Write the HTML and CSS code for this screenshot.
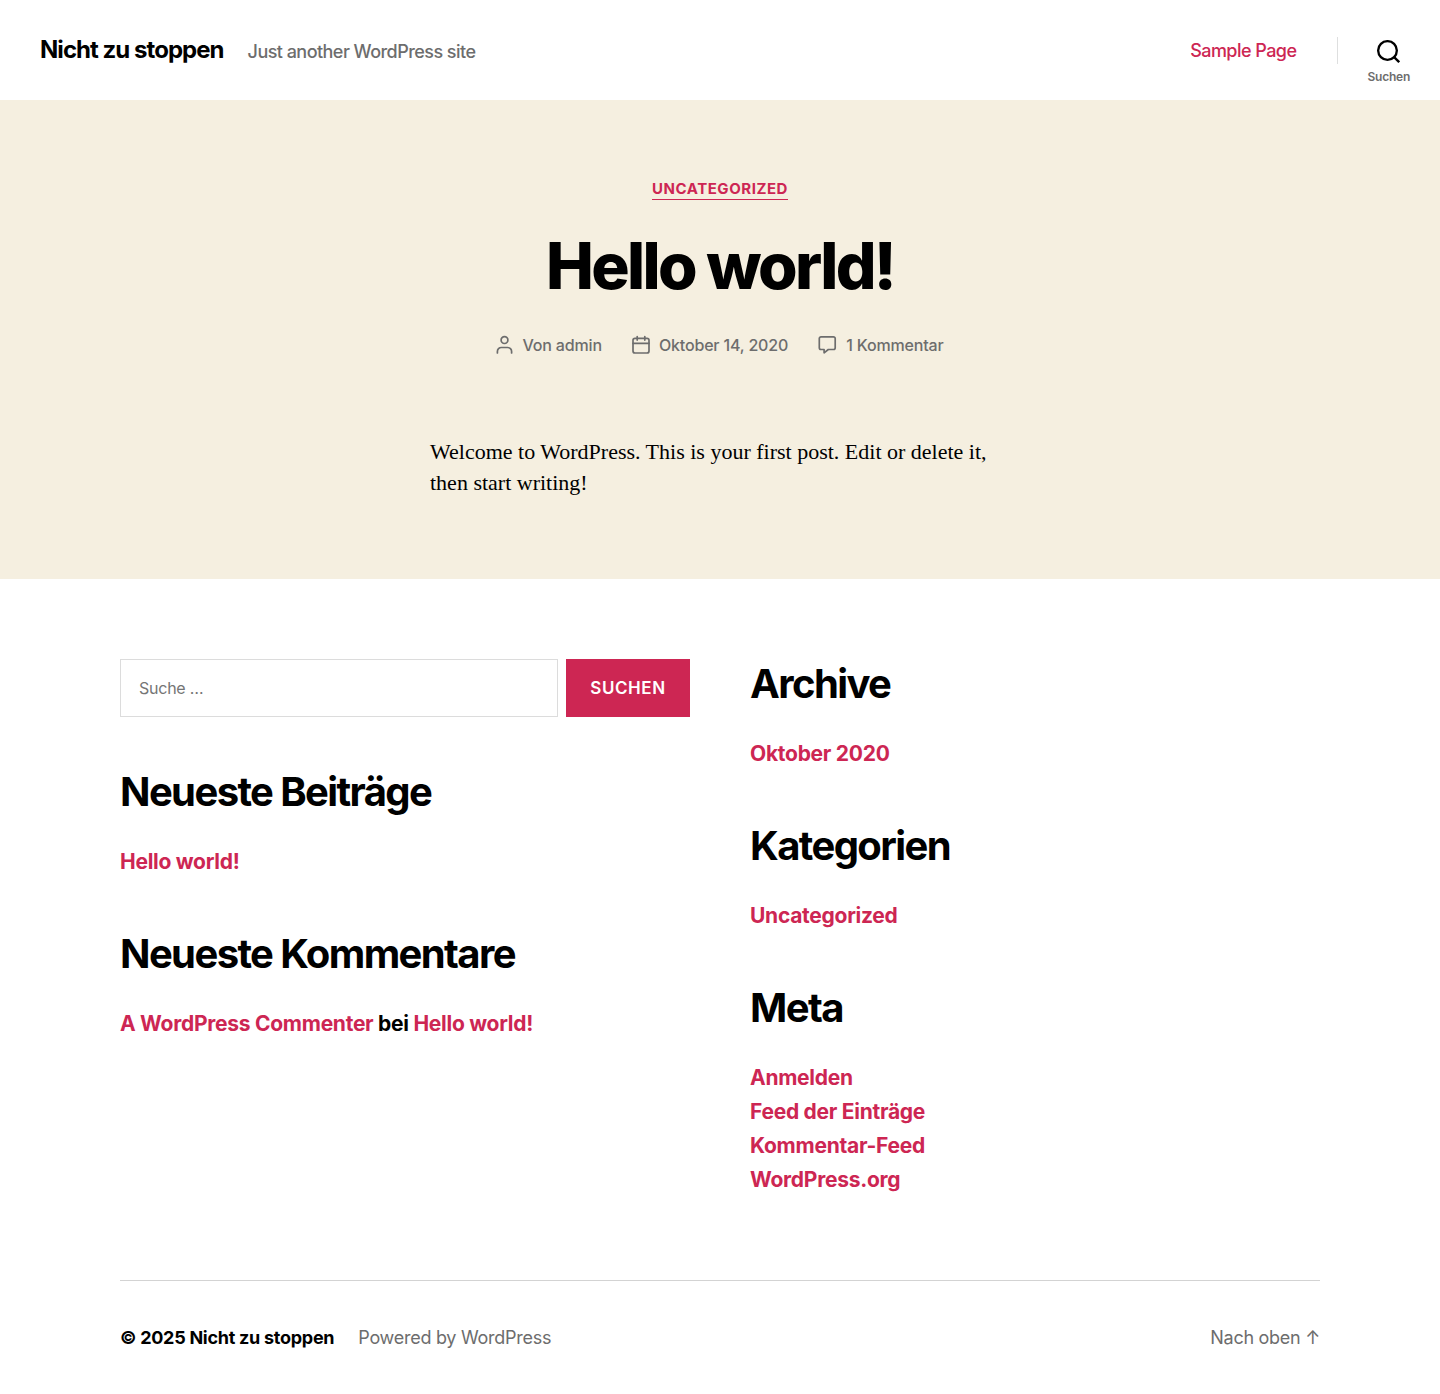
FILE: index.html
```html
<!DOCTYPE html>
<html lang="de">
<head>
<meta charset="utf-8">
<meta name="viewport" content="width=device-width, initial-scale=1">
<title>Hello world! – Nicht zu stoppen</title>
<link rel="stylesheet" href="styles.css">
</head>
<body>
<header class="site-header">
  <div class="site-titles">
    <a class="site-title" href="#">Nicht zu stoppen</a>
    <span class="site-description">Just another WordPress site</span>
  </div>
  <div class="header-navigation">
    <nav aria-label="Horizontal"><a class="menu-link" href="#">Sample Page</a></nav>
    <div class="toggle-wrapper">
      <button class="search-toggle" type="button">
        <svg width="23" height="23" viewBox="0 0 23 23" fill="none" stroke="currentColor" stroke-width="2.33" aria-hidden="true"><circle cx="10.5" cy="10.5" r="9.34"/><path d="M16.6 16.6 22.2 22.2"/></svg>
        <span>Suchen</span>
      </button>
    </div>
  </div>
</header>

<main class="post">
  <header class="post-header">
    <a class="category" href="#">Uncategorized</a>
    <h1 class="post-title">Hello world!</h1>
    <ul class="post-meta">
      <li>
        <svg width="17" height="20" viewBox="0 0 17 20" fill="none" stroke="currentColor" stroke-width="1.7" stroke-linecap="round" aria-hidden="true"><circle cx="8.500" cy="5.100" r="3.400"/><path d="M1.400 18v-1.600a3.900 3.900 0 0 1 3.900-3.900h6.400a3.900 3.900 0 0 1 3.900 3.900V18"/></svg>
        <span>Von <a href="#">admin</a></span>
      </li>
      <li>
        <svg width="18" height="20" viewBox="0 0 18 20" fill="none" stroke="currentColor" stroke-width="1.7" stroke-linecap="round" aria-hidden="true"><rect x="1" y="3.300" width="16" height="14.700" rx="2"/><path d="M1 8.300h16M5.200 1.500v3.600M12.800 1.500v3.600"/></svg>
        <a href="#">Oktober 14, 2020</a>
      </li>
      <li>
        <svg width="19" height="20" viewBox="0 0 19 20" fill="none" stroke="currentColor" stroke-width="1.7" stroke-linejoin="round" aria-hidden="true"><path d="M3 1.900h12.500a1.700 1.700 0 0 1 1.700 1.700v9.200a1.700 1.700 0 0 1-1.700 1.700H10.300l-4.200 3.300v-3.300H3a1.700 1.700 0 0 1-1.700-1.700V3.600A1.700 1.700 0 0 1 3 1.900z"/></svg>
        <a href="#">1 Kommentar</a>
      </li>
    </ul>
  </header>
  <div class="entry-content">
    <p>Welcome to WordPress. This is your first post. Edit or delete it, then start writing!</p>
  </div>
</main>

<div class="section-inner">
  <aside class="footer-widgets">
    <div class="widget-column">
      <form class="search-form" role="search">
        <input type="search" placeholder="Suche …" aria-label="Suche nach:">
        <button type="submit">Suchen</button>
      </form>
      <section class="widget">
        <h2>Neueste Beiträge</h2>
        <ul><li><a href="#">Hello world!</a></li></ul>
      </section>
      <section class="widget">
        <h2>Neueste Kommentare</h2>
        <ul><li><a href="#">A WordPress Commenter</a> bei <a href="#">Hello world!</a></li></ul>
      </section>
    </div>
    <div class="widget-column">
      <section class="widget">
        <h2>Archive</h2>
        <ul><li><a href="#">Oktober 2020</a></li></ul>
      </section>
      <section class="widget">
        <h2>Kategorien</h2>
        <ul><li><a href="#">Uncategorized</a></li></ul>
      </section>
      <section class="widget">
        <h2>Meta</h2>
        <ul>
          <li><a href="#">Anmelden</a></li>
          <li><a href="#">Feed der Einträge</a></li>
          <li><a href="#">Kommentar-Feed</a></li>
          <li><a href="#">WordPress.org</a></li>
        </ul>
      </section>
    </div>
  </aside>
  <footer class="site-footer">
    <p class="copyright">© 2025 <a href="#">Nicht zu stoppen</a></p>
    <a class="powered" href="#">Powered by WordPress</a>
    <a class="to-top" href="#">Nach oben <span aria-hidden="true">↑</span></a>
  </footer>
</div>
</body>
</html>
```
FILE: styles.css
```css
:root {
  --accent: #cd2653;
  --muted: #6d6d6d;
  --cream: #f5efe0;
  --line: #dcdcdc;
}

*, *::before, *::after { box-sizing: border-box; }

body {
  margin: 0;
  background: #fff;
  color: #000;
  font-family: Inter, "Liberation Sans", sans-serif;
  font-size: 18px;
  line-height: 25px;
  letter-spacing: -0.015em;
}

a { color: inherit; text-decoration: none; }
h1, h2, p, ul { margin: 0; padding: 0; }
ul { list-style: none; }
button, input { font-family: inherit; margin: 0; }
svg { display: block; flex: none; }

.site-header {
  display: flex;
  justify-content: space-between;
  align-items: center;
  min-height: 100px;
  padding: 0 0 0 40px;
}

.site-titles { display: flex; align-items: baseline; gap: 24px; }
.site-title { font-size: 24px; font-weight: 700; letter-spacing: -0.04em; }
.site-description { color: var(--muted); font-weight: 500; letter-spacing: -0.03em; }

.header-navigation { display: flex; align-items: center; }
.menu-link { color: var(--accent); font-weight: 500; letter-spacing: -0.03em; }

.toggle-wrapper {
  display: flex;
  align-items: center;
  height: 27px;
  margin-left: 40px;
  border-left: 1px solid #dedfdf;
}

.search-toggle {
  display: flex;
  flex-direction: column;
  align-items: center;
  gap: 6px;
  padding: 24px 30px 0;
  border: 0;
  background: none;
  color: #000;
}
.search-toggle span {
  color: var(--muted);
  font-size: 12px;
  font-weight: 600;
  line-height: 16px;
  letter-spacing: -0.02em;
}

.post { background: var(--cream); padding: 80px 40px 81px; }

.post-header {
  display: flex;
  flex-direction: column;
  align-items: center;
  text-align: center;
}

.category {
  padding-bottom: 2px;
  border-bottom: 1px solid var(--accent);
  color: var(--accent);
  font-size: 15px;
  font-weight: 700;
  line-height: 17px;
  letter-spacing: 0.0366em;
  text-transform: uppercase;
}

.post-title {
  margin-top: 30px;
  font-size: 64px;
  font-weight: 800;
  line-height: 72px;
  letter-spacing: -0.0415625em;
}

.post-meta {
  display: flex;
  flex-wrap: wrap;
  justify-content: center;
  gap: 8px 30px;
  margin-top: 31px;
  color: var(--muted);
  font-size: 16px;
  font-weight: 500;
  line-height: 24px;
  letter-spacing: -0.01em;
}
.post-meta li { display: flex; align-items: center; gap: 9px; }

.entry-content {
  max-width: 580px;
  margin: 79px auto 0;
  font-family: "Hoefler Text", Garamond, "Liberation Serif", serif;
  font-size: 22px;
  line-height: 31px;
  letter-spacing: normal;
}

.section-inner { max-width: 1280px; margin: 0 auto; padding: 0 40px; }

.footer-widgets {
  display: grid;
  grid-template-columns: 1fr 1fr;
  gap: 60px;
  padding: 80px 0 83px;
}
.widget-column { display: flex; flex-direction: column; gap: 50px; }

.search-form { display: flex; gap: 8px; }
.search-form input {
  flex: 1;
  min-width: 0;
  height: 58px;
  padding: 0 18px;
  border: 1px solid var(--line);
  border-radius: 0;
  background: #fff;
  font-size: 16px;
  letter-spacing: -0.015em;
  appearance: none;
}
.search-form input::placeholder { color: #757575; opacity: 1; }
.search-form button {
  min-width: 124px;
  padding: 0 24px;
  border: 0;
  background: var(--accent);
  color: #fff;
  font-size: 17px;
  font-weight: 600;
  letter-spacing: 0.0333em;
  text-transform: uppercase;
}

.widget h2 {
  margin-bottom: 29px;
  font-size: 40px;
  font-weight: 700;
  line-height: 49px;
  letter-spacing: -0.04em;
}
.widget ul { font-size: 21px; font-weight: 700; line-height: 34px; }
.widget a { color: var(--accent); }

.site-footer {
  display: flex;
  flex-wrap: wrap;
  gap: 24px;
  padding: 44px 0;
  border-top: 1px solid #d3d3d3;
}
.copyright { font-weight: 700; }
.powered, .to-top { color: var(--muted); }
.to-top { margin-left: auto; }
```
